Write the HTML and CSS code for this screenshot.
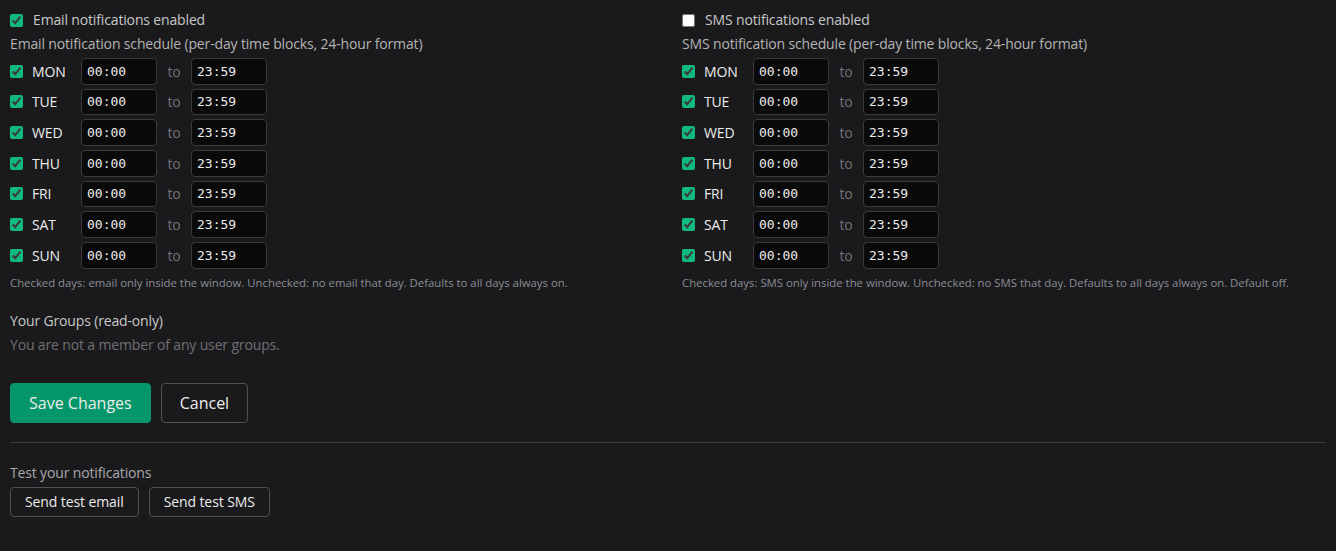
FILE: index.html
```html
<!DOCTYPE html>
<html lang="en">
<head>
    <meta charset="UTF-8">
    <meta name="viewport" content="width=device-width, initial-scale=1.0">
    <title>Notification Settings</title>
    <link rel="stylesheet" href="styles.css">
</head>
<body>
    <div class="page">
        <div class="columns">
            <div class="channel" id="email-channel">
                <label class="toggle"><input type="checkbox" checked> Email notifications enabled</label>
                <div class="schedule-title">Email notification schedule (per-day time blocks, 24-hour format)</div>
                <div class="days"></div>
                <p class="hint">Checked days: email only inside the window. Unchecked: no email that day. Defaults to all days always on.</p>
            </div>
            <div class="channel" id="sms-channel">
                <label class="toggle"><input type="checkbox"> SMS notifications enabled</label>
                <div class="schedule-title">SMS notification schedule (per-day time blocks, 24-hour format)</div>
                <div class="days"></div>
                <p class="hint">Checked days: SMS only inside the window. Unchecked: no SMS that day. Defaults to all days always on. Default off.</p>
            </div>
        </div>

        <div class="groups">
            <div class="groups-title">Your Groups (read-only)</div>
            <div class="groups-empty">You are not a member of any user groups.</div>
        </div>

        <div class="actions">
            <button class="btn btn-primary">Save Changes</button>
            <button class="btn">Cancel</button>
        </div>

        <hr class="divider">

        <div class="test">
            <div class="test-title">Test your notifications</div>
            <div class="test-buttons">
                <button class="btn btn-small">Send test email</button>
                <button class="btn btn-small">Send test SMS</button>
            </div>
        </div>
    </div>

    <script>
        const DAYS = ['MON', 'TUE', 'WED', 'THU', 'FRI', 'SAT', 'SUN'];

        document.querySelectorAll('.days').forEach(list => {
            DAYS.forEach(day => {
                const row = document.createElement('div');
                row.className = 'day-row';
                row.innerHTML =
                    '<label class="day"><input type="checkbox" checked> <span>' + day + '</span></label>' +
                    '<input class="time" type="text" value="00:00">' +
                    '<span class="to">to</span>' +
                    '<input class="time" type="text" value="23:59">';
                list.appendChild(row);
            });
        });
    </script>
</body>
</html>
```

FILE: styles.css
```css
body {
    margin: 0;
    background-color: #1a1a1c;
    color: #d4d4d4;
    font-family: 'Open Sans', 'Noto Sans', sans-serif;
    font-size: 14px;
    letter-spacing: -0.15px;
}
.page {
    padding: 10px;
}
.columns {
    display: grid;
    grid-template-columns: 1fr 1fr;
    column-gap: 28px;
}
input[type="checkbox"] {
    accent-color: #10b981;
    width: 13px;
    height: 13px;
    margin: 0 10px 0 0;
}
.toggle {
    display: flex;
    align-items: center;
    height: 20px;
    line-height: 20px;
    color: #c8c8c8;
}
.schedule-title {
    margin-top: 4px;
    line-height: 20px;
    color: #b4b4b4;
}
.days {
    margin-top: 4px;
    display: flex;
    flex-direction: column;
    gap: 4px;
}
.day-row {
    display: flex;
    align-items: center;
    height: 26.67px;
}
.day {
    display: flex;
    align-items: center;
    width: 71px;
    color: #ececec;
}
.day input[type="checkbox"] {
    margin-right: 9px;
}
.time {
    box-sizing: border-box;
    width: 76px;
    height: 26.67px;
    padding: 0 5px;
    background-color: #0a0a0b;
    border: 1px solid #3a3a3d;
    border-radius: 4px;
    color: #ececec;
    font-family: 'DejaVu Sans Mono', monospace;
    font-size: 13px;
    letter-spacing: 0;
}
.to {
    width: 34px;
    text-align: center;
    color: #727276;
}
.hint {
    margin: 6px 0 0;
    font-size: 11.35px;
    line-height: 16px;
    letter-spacing: 0;
    color: #8a8d94;
}
.groups {
    margin-top: 20px;
}
.groups-title {
    line-height: 20px;
    color: #c8c8c8;
}
.groups-empty {
    margin-top: 4px;
    line-height: 20px;
    color: #707074;
}
.actions {
    margin-top: 28px;
    display: flex;
    gap: 10px;
}
.btn {
    height: 40px;
    padding: 0 18px;
    background-color: #1a1a1c;
    border: 1px solid #505054;
    border-radius: 4px;
    color: #ececec;
    font-family: inherit;
    font-size: 16px;
    letter-spacing: 0;
}
.btn-primary {
    background-color: #059669;
    border-color: #059669;
}
.divider {
    margin: 19px 0 0;
    border: 0;
    border-top: 1px solid #3c3c3f;
}
.test {
    margin-top: 20px;
}
.test-title {
    line-height: 20px;
    color: #a8a8ac;
}
.test-buttons {
    margin-top: 4px;
    display: flex;
    gap: 10px;
}
.btn-small {
    height: 30px;
    padding: 0 14px;
    font-size: 14px;
    letter-spacing: -0.1px;
}
```
